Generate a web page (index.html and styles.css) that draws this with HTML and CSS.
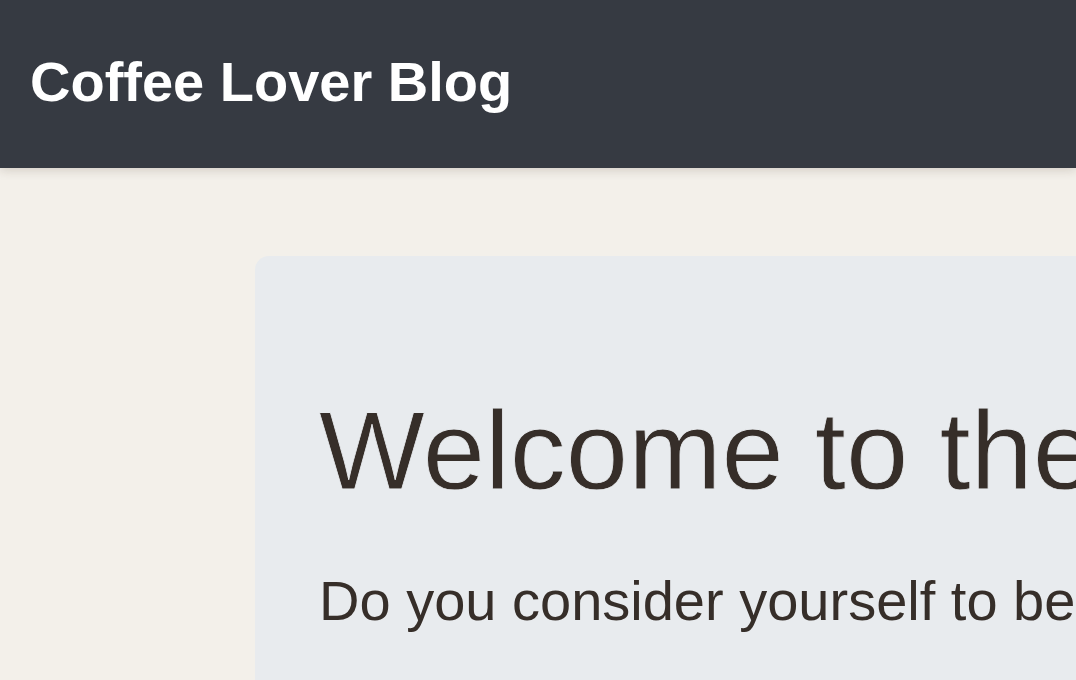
FILE: index.html
```html
<!DOCTYPE html>
<html lang="en">
<head>
<meta charset="utf-8">
<title>Coffee Lover Blog</title>
<link rel="stylesheet" href="styles.css">
</head>
<body>
<div class="page">
  <header class="site-header">
    <a class="brand" href="#">Coffee Lover Blog</a>
  </header>
  <main class="main">
    <section class="hero">
      <h1 class="hero-title">Welcome to the Coffee Lover Blog!</h1>
      <p class="hero-lead">Do you consider yourself to be a coffee lover? Then you are in the right place.</p>
    </section>
  </main>
</div>
</body>
</html>
```
FILE: styles.css
```css
* { box-sizing: border-box; }
html, body {
  margin: 0;
  padding: 0;
  height: 100%;
  overflow: hidden;
}
body {
  font-family: "Liberation Sans", Arial, Helvetica, sans-serif;
  background: #f3f0ea;
  color: #362e29;
}
.page {
  width: 100%;
  height: 100vh;
  overflow: hidden;
}
.site-header {
  height: 168px;
  background: #363a42;
  display: flex;
  align-items: center;
  padding-left: 30px;
  box-shadow: 0 2px 10px rgba(60, 40, 20, 0.18);
  position: relative;
  z-index: 1;
}
.brand {
  color: #ffffff;
  text-decoration: none;
  font-weight: 700;
  font-size: 56px;
  line-height: 1.2;
  margin-top: -4px;
}
.main {
  padding: 88px 0 0 255px;
}
.hero {
  width: 1400px;
  background: #e8ebee;
  border-radius: 14px;
  padding: 128px 64px;
  white-space: nowrap;
}
.hero-title {
  margin: 0 0 41px;
  font-size: 112px;
  font-weight: 400;
  line-height: 1.2;
  -webkit-text-stroke: 0.8px #e8ebee;
}
.hero-lead {
  margin: 0;
  font-size: 56px;
  line-height: 1.5;
}
```
